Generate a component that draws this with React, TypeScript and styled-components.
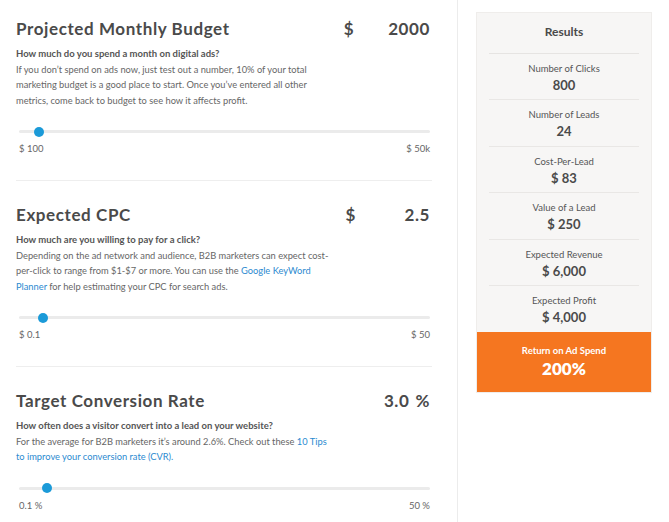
import React from "react";
import styled, { createGlobalStyle } from "styled-components";

const GlobalStyle = createGlobalStyle`
  body {
    margin: 0;
    background: #fff;
    font-family: "Lato", "Open Sans", sans-serif;
    color: #555;
  }
`;

// needed by the field copy below, so it lives up here
const Link = styled.a`
  color: #2b8ad0;
  text-decoration: none;
`;

type Field = {
  title: string;
  prefix?: string;
  value: string;
  suffix?: string;
  question: string;
  body: React.ReactNode;
  min: number;
  max: number;
  current: number;
  minLabel: string;
  maxLabel: string;
};

const fields: Field[] = [
  {
    title: "Projected Monthly Budget",
    prefix: "$",
    value: "2000",
    question: "How much do you spend a month on digital ads?",
    body: (
      <>
        If you don’t spend on ads now, just test out a number, 10% of your total
        <br />
        marketing budget is a good place to start. Once you’ve entered all other
        <br />
        metrics, come back to budget to see how it affects profit.
      </>
    ),
    min: 100,
    max: 50000,
    current: 2000,
    minLabel: "$ 100",
    maxLabel: "$ 50k",
  },
  {
    title: "Expected CPC",
    prefix: "$",
    value: "2.5",
    question: "How much are you willing to pay for a click?",
    body: (
      <>
        Depending on the ad network and audience, B2B marketers can expect cost-
        <br />
        per-click to range from $1-$7 or more. You can use the <Link href="#">Google KeyWord</Link>
        <br />
        <Link href="#">Planner</Link> for help estimating your CPC for search ads.
      </>
    ),
    min: 0.1,
    max: 50,
    current: 2.5,
    minLabel: "$ 0.1",
    maxLabel: "$ 50",
  },
  {
    title: "Target Conversion Rate",
    value: "3.0",
    suffix: "%",
    question: "How often does a visitor convert into a lead on your website?",
    body: (
      <>
        For the average for B2B marketers it’s around 2.6%. Check out these <Link href="#">10 Tips</Link>
        <br />
        <Link href="#">to improve your conversion rate (CVR).</Link>
      </>
    ),
    min: 0.1,
    max: 50,
    current: 3.0,
    minLabel: "0.1 %",
    maxLabel: "50 %",
  },
];

const results = [
  { label: "Number of Clicks", value: "800" },
  { label: "Number of Leads", value: "24" },
  { label: "Cost-Per-Lead", value: "$ 83" },
  { label: "Value of a Lead", value: "$ 250" },
  { label: "Expected Revenue", value: "$ 6,000" },
  { label: "Expected Profit", value: "$ 4,000" },
];

const App = () => {
  return (
    <>
      <GlobalStyle />
      <Page>
        <Inputs>
          {fields.map((f) => (
            <Section key={f.title}>
              <Header>
                <Title>{f.title}</Title>
                <ValueBox>
                  {f.prefix && <Currency>{f.prefix}</Currency>}
                  <Amount>
                    {f.value}
                    {f.suffix && <Suffix>{f.suffix}</Suffix>}
                  </Amount>
                </ValueBox>
              </Header>
              <Question>{f.question}</Question>
              <Body>{f.body}</Body>
              <Range
                type="range"
                min={f.min}
                max={f.max}
                step="any"
                defaultValue={f.current}
              />
              <RangeLabels>
                <span>{f.minLabel}</span>
                <span>{f.maxLabel}</span>
              </RangeLabels>
            </Section>
          ))}
        </Inputs>
        <Sidebar>
          <ResultsCard>
            <ResultsTitle>Results</ResultsTitle>
            {results.map((r) => (
              <ResultRow key={r.label}>
                <ResultLabel>{r.label}</ResultLabel>
                <ResultValue>{r.value}</ResultValue>
              </ResultRow>
            ))}
            <Roas>
              <RoasLabel>Return on Ad Spend</RoasLabel>
              <RoasValue>200%</RoasValue>
            </Roas>
          </ResultsCard>
        </Sidebar>
      </Page>
    </>
  );
};

const Page = styled.div`
  display: flex;
  width: 669px;
  height: 522px;
  overflow: hidden;
`;

const Inputs = styled.div`
  width: 416px;
  padding: 0 25px 0 16px;
  border-right: 1px solid #ececec;
`;

const Section = styled.div`
  padding: 23px 0 26px;
  border-bottom: 1px solid #eeeeee;

  &:first-child {
    padding-top: 18px;
  }

  &:last-child {
    border-bottom: none;
  }
`;

const Header = styled.div`
  display: flex;
  align-items: center;
  justify-content: space-between;
  height: 20px;
`;

const Title = styled.h2`
  margin: 0;
  font-size: 17px;
  font-weight: 700;
  letter-spacing: 0.6px;
  color: #4a4a4a;
`;

const ValueBox = styled.div`
  display: flex;
  align-items: center;
  font-size: 17px;
  font-weight: 700;
  color: #4a4a4a;
  letter-spacing: 0.6px;
`;

const Currency = styled.span`
  margin-right: 34px;
`;

const Amount = styled.span`
  min-width: 40px;
  margin-right: 2px;
  text-align: right;
`;

const Suffix = styled.span`
  margin-left: 6px;
`;

const Question = styled.div`
  margin-top: 8px;
  font-size: 9.5px;
  font-weight: 700;
  color: #555;
  line-height: 15.5px;
`;

const Body = styled.div`
  font-size: 9.3px;
  color: #666;
  line-height: 15.5px;
`;

const Range = styled.input`
  -webkit-appearance: none;
  appearance: none;
  display: block;
  width: 411px;
  height: 3px;
  margin: 22px 0 0 3px;
  background: #ebebeb;
  border-radius: 2px;
  outline: none;

  &::-webkit-slider-thumb {
    -webkit-appearance: none;
    appearance: none;
    width: 10px;
    height: 10px;
    border-radius: 50%;
    background: #1b9ad8;
    border: none;
    cursor: pointer;
  }
`;

const RangeLabels = styled.div`
  display: flex;
  justify-content: space-between;
  margin: 10px 2px 0 3px;
  font-size: 9.5px;
  color: #666;
`;

const Sidebar = styled.div`
  flex: 1;
  padding: 12px 0 0 18px;
`;

const ResultsCard = styled.div`
  width: 176px;
  background: #f7f6f5;
  border: 1px solid #efedeb;
  box-sizing: border-box;
`;

const ResultsTitle = styled.div`
  margin: 0 12px;
  padding: 11px 0 13.5px;
  text-align: center;
  font-size: 12px;
  font-weight: 700;
  color: #4a4a4a;
  border-bottom: 1px solid #e6e4e2;
`;

const ResultRow = styled.div`
  margin: 0 12px;
  padding: 8px 0 5.5px;
  text-align: center;
  border-bottom: 1px solid #e9e7e5;

  &:nth-last-of-type(2) {
    border-bottom: none;
  }
`;

const ResultLabel = styled.div`
  font-size: 9.5px;
  color: #555;
  line-height: 14px;
`;

const ResultValue = styled.div`
  font-size: 13px;
  font-weight: 700;
  color: #4a4a4a;
  line-height: 18px;
`;

const Roas = styled.div`
  background: #f57620;
  padding: 12px 0 12px;
  text-align: center;
  color: #fff;
`;

const RoasLabel = styled.div`
  font-size: 9.5px;
  font-weight: 700;
  line-height: 14px;
`;

const RoasValue = styled.div`
  font-size: 17px;
  font-weight: 800;
  line-height: 22px;
`;

export default App;
